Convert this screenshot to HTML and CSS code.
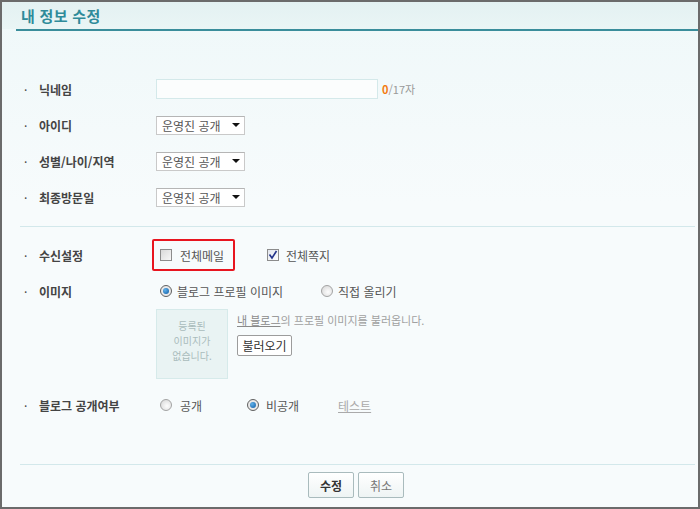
FILE: index.html
```html
<!DOCTYPE html>
<html lang="ko">

<head>
    <meta charset="UTF-8">
    <meta name="viewport" content="width=device-width, initial-scale=1.0">
    <title>내 정보 수정</title>

    <link rel="stylesheet" href="styles.css">
</head>

<body>
    <div class="frame">
        <div class="title-bar">
            <h1>내 정보 수정</h1>
        </div>
        <div class="title-line"></div>

        <div class="section first">
            <div class="row">
                <span class="label">닉네임</span>
                <div class="field">
                    <input type="text" class="nick-input">
                    <span class="counter"><b>0</b>/17자</span>
                </div>
            </div>
            <div class="row">
                <span class="label">아이디</span>
                <div class="field">
                    <div class="select"><span>운영진 공개</span><i class="arrow"></i></div>
                </div>
            </div>
            <div class="row">
                <span class="label">성별/나이/지역</span>
                <div class="field">
                    <div class="select"><span>운영진 공개</span><i class="arrow"></i></div>
                </div>
            </div>
            <div class="row">
                <span class="label">최종방문일</span>
                <div class="field">
                    <div class="select"><span>운영진 공개</span><i class="arrow"></i></div>
                </div>
            </div>
        </div>

        <div class="divider"></div>

        <div class="section second">
            <div class="row">
                <span class="label">수신설정</span>
                <div class="field">
                    <label class="option highlight">
                        <span class="check"></span>
                        <span>전체메일</span>
                    </label>
                    <label class="option mail-note">
                        <span class="check checked">
                            <svg width="10" height="10" viewBox="0 0 10 10">
                                <path d="M1.5 4.5 L4 8 L8.5 1" fill="none" stroke="#23338a" stroke-width="1.6" />
                            </svg>
                        </span>
                        <span>전체쪽지</span>
                    </label>
                </div>
            </div>
            <div class="row">
                <span class="label">이미지</span>
                <div class="field radios">
                    <label class="option w161">
                        <span class="radio checked"></span>
                        <span>블로그 프로필 이미지</span>
                    </label>
                    <label class="option">
                        <span class="radio"></span>
                        <span>직접 올리기</span>
                    </label>
                </div>
            </div>
            <div class="image-row">
                <div class="image-box">등록된<br>이미지가<br>없습니다.</div>
                <div class="image-side">
                    <p class="hint"><a href="#">내 블로그</a>의 프로필 이미지를 불러옵니다.</p>
                    <button class="load-btn">불러오기</button>
                </div>
            </div>
            <div class="row open-row">
                <span class="label">블로그 공개여부</span>
                <div class="field radios">
                    <label class="option w87">
                        <span class="radio"></span>
                        <span>공개</span>
                    </label>
                    <label class="option w91">
                        <span class="radio checked"></span>
                        <span>비공개</span>
                    </label>
                    <a href="#" class="test-link">테스트</a>
                </div>
            </div>
        </div>

        <div class="divider"></div>

        <div class="footer">
            <button class="btn btn-ok">수정</button>
            <button class="btn btn-cancel">취소</button>
        </div>
    </div>
</body>

</html>
```

FILE: styles.css
```css
* {
    margin: 0;
    padding: 0;
    box-sizing: border-box;
}

body {
    font-family: "Noto Sans CJK KR", "Noto Sans", sans-serif;
    font-size: 12px;
    color: #555;
}

.frame {
    width: 700px;
    height: 509px;
    border: 2px solid #6b6b6b;
    overflow: hidden;
    background: linear-gradient(#eff8f9, #f7fbfc 40%, #f7fbfc);
}

/* 제목 */
.title-bar {
    height: 27px;
    padding-left: 19px;
    display: flex;
    align-items: center;
    background: linear-gradient(#e3f1f2, #eaf5f5);
}

.title-line {
    height: 2px;
    margin-left: 14px;
    background: #3a8d9b;
}

h1 {
    font-size: 15px;
    font-weight: bold;
    color: #2f8b9a;
    letter-spacing: 0.3px;
    line-height: 1;
}

.section.first {
    padding-top: 40px;
    padding-bottom: 11px;
}

.section.second {
    padding-top: 10px;
    padding-bottom: 41px;
}

.divider {
    height: 1px;
    margin: 0 3px 0 18px;
    background: #d3e8eb;
}

.row {
    display: flex;
    align-items: center;
    height: 36px;
    padding-left: 22px;
}

.label {
    width: 132px;
    font-weight: bold;
    color: #444;
    display: flex;
    align-items: center;
}

.label::before {
    content: "·";
    width: 15px;
    font-weight: normal;
}

.field {
    display: flex;
    align-items: center;
}

.field.radios {
    padding-left: 4px;
}

.nick-input {
    width: 222px;
    height: 20px;
    border: 1px solid #d4e9ea;
    background: #fbfdfd;
    outline: none;
}

.counter {
    margin-left: 4px;
    font-size: 11px;
    color: #999;
}

.counter b {
    color: #f37c12;
}

.select {
    width: 89px;
    height: 19px;
    border: 1px solid #c9c9c9;
    border-top-color: #b5b5b5;
    background: #fff;
    display: flex;
    align-items: center;
    justify-content: space-between;
    padding: 0 4px 0 5px;
    color: #555;
}

.arrow {
    width: 0;
    height: 0;
    border-left: 4px solid transparent;
    border-right: 4px solid transparent;
    border-top: 4px solid #111;
}

.option {
    display: flex;
    align-items: center;
    gap: 5px;
    color: #555;
}

.highlight {
    width: 83px;
    height: 32px;
    margin-left: -4px;
    border: 2px solid #e8151f;
    border-radius: 2px;
    padding: 0 0 0 6px;
    gap: 8px;
}

.mail-note {
    margin-left: 32px;
    gap: 7px;
}

.check {
    width: 12px;
    height: 12px;
    border: 1px solid #8c8c8c;
    background: linear-gradient(135deg, #d9d9d9, #f7f7f7);
    display: flex;
    align-items: center;
    justify-content: center;
}

.check.checked {
    background: linear-gradient(135deg, #e2e6ee, #fdfdfd);
}

.radio {
    width: 12px;
    height: 12px;
    border-radius: 50%;
    border: 1px solid #a3a3a3;
    background: radial-gradient(circle at 60% 60%, #fdfdfd, #d4d4d4);
    display: flex;
    align-items: center;
    justify-content: center;
}

.radio.checked {
    border-color: #606060;
    background: #e9e9e9;
}

.radio.checked::after {
    content: "";
    width: 6px;
    height: 6px;
    border-radius: 50%;
    background: radial-gradient(circle at 35% 35%, #5fb1ea, #0e5aa3);
}

.w161 {
    width: 161px;
}

.w87 {
    width: 87px;
    gap: 8px;
}

.w91 {
    width: 91px;
    gap: 7px;
}

.image-row {
    display: flex;
    padding-left: 154px;
    height: 70px;
}

.image-box {
    width: 72px;
    height: 70px;
    border: 1px solid #d6eaea;
    background: #e9f3f3;
    color: #a9bcbc;
    font-size: 10px;
    line-height: 15px;
    text-align: center;
    padding-top: 8px;
}

.image-side {
    margin-left: 9px;
}

.hint {
    font-size: 11px;
    color: #a0a0a0;
    line-height: 14px;
    margin-top: 4px;
}

.hint a {
    color: #8a8a8a;
}

.load-btn {
    margin-top: 8px;
    width: 55px;
    height: 21px;
    border: 1px solid #9c9c9c;
    border-radius: 2px;
    background: #fff;
    font-family: inherit;
    font-size: 12px;
    color: #333;
}

.open-row {
    margin-top: 8px;
}

.test-link {
    color: #aaa;
}

.footer {
    display: flex;
    justify-content: center;
    gap: 4px;
    margin: 0 6px 0 18px;
    padding-top: 7px;
}

.btn {
    width: 46px;
    height: 26px;
    border: 1px solid #a9bbbd;
    border-radius: 2px;
    background: linear-gradient(#ffffff, #eef4f4);
    font-family: inherit;
    font-size: 12px;
}

.btn-ok {
    font-weight: bold;
    color: #333;
}

.btn-cancel {
    color: #777;
}
```
